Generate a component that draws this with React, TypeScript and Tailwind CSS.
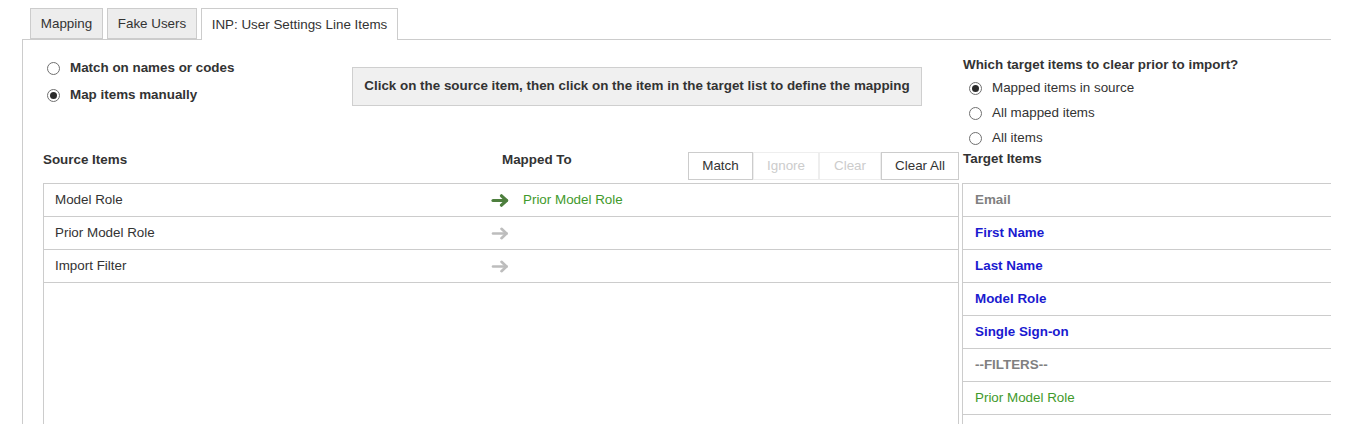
import React, { useState } from 'react';

const font = { fontFamily: '"Liberation Sans", Arial, sans-serif' };

const Radio: React.FC<{ checked?: boolean }> = ({ checked }) => (
  <span className="w-[13px] h-[13px] rounded-full border border-[#707070] bg-white flex items-center justify-center shrink-0">
    {checked && <span className="w-[7px] h-[7px] rounded-full bg-[#2b2b2b]" />}
  </span>
);

const Arrow: React.FC<{ active?: boolean }> = ({ active }) => (
  <svg width="18" height="13" viewBox="0 0 18 13" className={active ? 'text-[#4e7f3e]' : 'text-[#bdbdbd]'}>
    <g fill="none" stroke="currentColor" strokeWidth={active ? 3.2 : 2.6} strokeLinecap="round" strokeLinejoin="round">
      <line x1="2" y1="6.5" x2="15.5" y2="6.5" />
      <polyline points="10.5,1.8 15.5,6.5 10.5,11.2" />
    </g>
  </svg>
);

const sourceItems = [
  { name: 'Model Role', mapped: 'Prior Model Role' },
  { name: 'Prior Model Role', mapped: '' },
  { name: 'Import Filter', mapped: '' },
];

const targetItems = [
  { name: 'Email', cls: 'font-bold text-[#808080]' },
  { name: 'First Name', cls: 'font-bold text-[#1a1ad0]' },
  { name: 'Last Name', cls: 'font-bold text-[#1a1ad0]' },
  { name: 'Model Role', cls: 'font-bold text-[#1a1ad0]' },
  { name: 'Single Sign-on', cls: 'font-bold text-[#1a1ad0]' },
  { name: '--FILTERS--', cls: 'font-bold text-[#808080]' },
  { name: 'Prior Model Role', cls: 'text-[#3f9a2c]' },
];

export default function App() {
  const [mode, setMode] = useState(1);
  const [clearMode, setClearMode] = useState(0);
  const tabs = [
    { label: 'Mapping', w: 'w-[73px]' },
    { label: 'Fake Users', w: 'w-[90px]' },
    { label: 'INP: User Settings Line Items', w: 'w-[197px]' },
  ];

  return (
    <div className="w-[1357px] h-[444px] bg-white text-[13.4px] text-[#333] overflow-hidden" style={font}>
      {/* Tabs */}
      <div className="flex gap-[4px] pl-[30px] pt-[8px] relative z-10">
        {tabs.map((t, i) => (
          <div
            key={t.label}
            className={
              i === 2
                ? `${t.w} h-[32px] pt-[2px] flex items-center justify-center border border-b-0 border-[#ccc] bg-white`
                : `${t.w} h-[31px] pt-[2px] flex items-center justify-center border border-[#ccc] bg-[#ededed]`
            }
          >
            {t.label}
          </div>
        ))}
      </div>

      {/* Panel */}
      <div className="ml-[22px] w-[1309px] h-[385px] border-l border-t border-[#ccc] -mt-px pl-[20px] flex gap-[3px] overflow-hidden">
        {/* Left column */}
        <div className="w-[916px] shrink-0 flex flex-col">
          <div className="h-[112px] shrink-0 flex">
            <div className="w-[309px] pl-[4px] pt-[18px] flex flex-col gap-[7px] font-bold">
              {['Match on names or codes', 'Map items manually'].map((l, i) => (
                <label key={l} className="h-[20px] flex items-center gap-[10px] cursor-pointer" onClick={() => setMode(i)}>
                  <Radio checked={mode === i} />
                  {l}
                </label>
              ))}
            </div>
            <div className="mt-[27px] w-[570px] h-[39px] bg-[#f0f0f0] border border-[#cfcfcf] flex items-center justify-center font-bold">
              Click on the source item, then click on the item in the target list to define the mapping
            </div>
          </div>

          <div className="h-[28px] shrink-0 flex items-start">
            <div className="w-[459px] font-bold leading-[16px]">Source Items</div>
            <div className="w-[186px] font-bold leading-[16px]">Mapped To</div>
            <div className="flex h-[28px]">
              <button className="w-[65px] border border-[#ccc] bg-white text-[#333]">Match</button>
              <button className="w-[66px] border border-[#eee] bg-white text-[#ccc]" disabled>Ignore</button>
              <button className="w-[62px] border border-[#eee] bg-white text-[#ccc]" disabled>Clear</button>
              <button className="w-[78px] border border-[#ccc] bg-white text-[#333]">Clear All</button>
            </div>
          </div>

          <div className="mt-[3px] border border-[#ccc] h-[300px] shrink-0">
            {sourceItems.map((s) => (
              <div key={s.name} className="h-[33px] border-b border-[#ccc] flex items-center pl-[11px]">
                <div className="w-[436px]">{s.name}</div>
                <Arrow active={!!s.mapped} />
                <div className="ml-[14px] text-[#3f9a2c]">{s.mapped}</div>
              </div>
            ))}
          </div>
        </div>

        {/* Right column */}
        <div className="flex-1 flex flex-col">
          <div className="pt-[17px] pl-[1px] font-bold leading-[16px]">Which target items to clear prior to import?</div>
          <div className="mt-[3px] pl-[7px]">
            {['Mapped items in source', 'All mapped items', 'All items'].map((l, i) => (
              <label key={l} className="h-[25px] flex items-center gap-[10px] cursor-pointer" onClick={() => setClearMode(i)}>
                <Radio checked={clearMode === i} />
                {l}
              </label>
            ))}
          </div>
          <div className="pl-[1px] font-bold leading-[16px]">Target Items</div>
          <div className="mt-[16px] border-l border-t border-[#ccc] h-[300px] shrink-0">
            {targetItems.map((t) => (
              <div key={t.name} className={`h-[33px] border-b border-[#ccc] flex items-center pl-[12px] ${t.cls}`}>
                {t.name}
              </div>
            ))}
          </div>
        </div>
      </div>
    </div>
  );
}
